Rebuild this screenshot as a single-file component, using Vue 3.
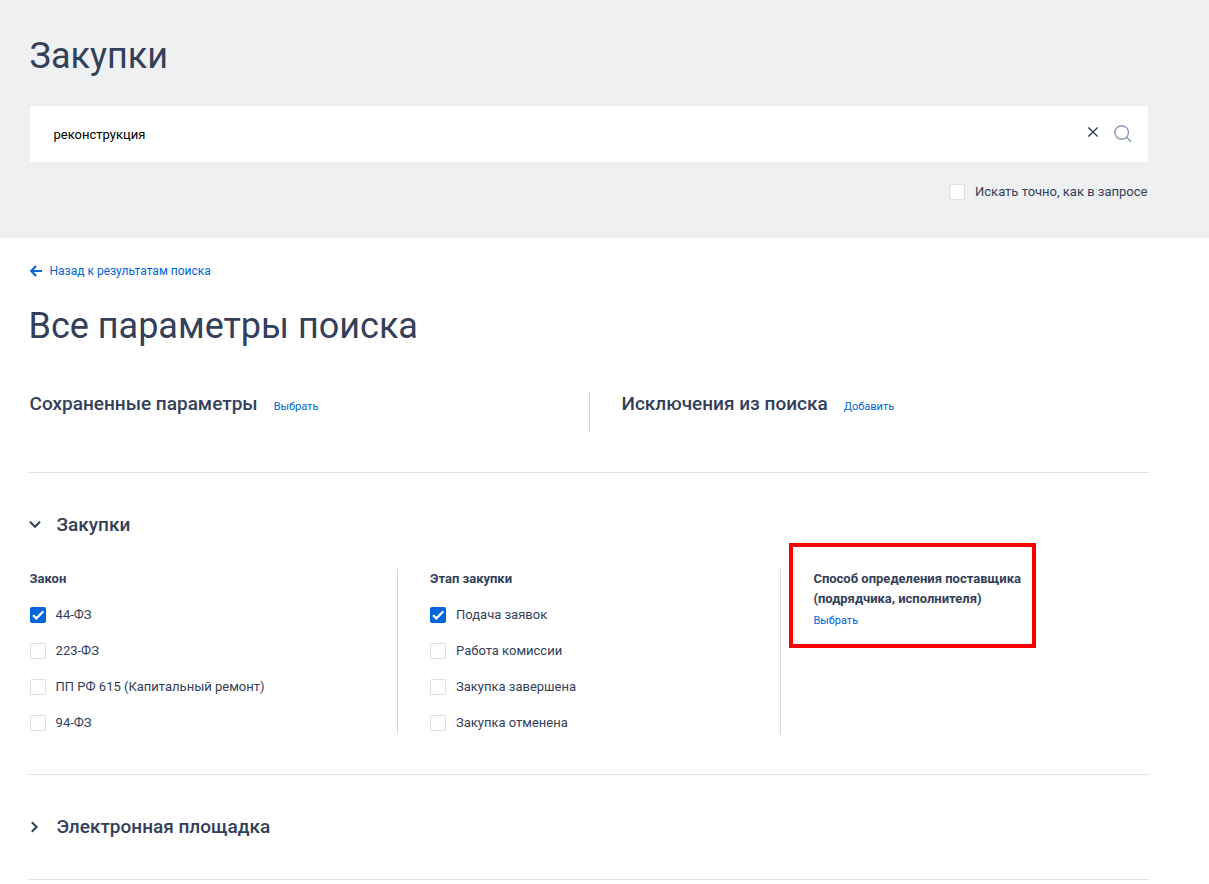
<script setup>
import { ref } from 'vue'

const query = ref('реконструкция')
const exact = ref(false)

// группы фильтров раздела «Закупки»
const groups = ref([
  {
    title: 'Закон',
    items: [
      { label: '44-ФЗ', checked: true },
      { label: '223-ФЗ', checked: false },
      { label: 'ПП РФ 615 (Капитальный ремонт)', checked: false },
      { label: '94-ФЗ', checked: false },
    ],
  },
  {
    title: 'Этап закупки',
    items: [
      { label: 'Подача заявок', checked: true },
      { label: 'Работа комиссии', checked: false },
      { label: 'Закупка завершена', checked: false },
      { label: 'Закупка отменена', checked: false },
    ],
  },
])

function clearQuery() {
  query.value = ''
}
</script>

<template>
  <div class="page">
    <header class="header">
      <h1 class="title title-top">Закупки</h1>
      <div class="search">
        <input v-model="query" class="search-input" type="text" />
        <button class="clear" @click="clearQuery">
          <svg width="12" height="12" viewBox="0 0 12 12">
            <path d="M1.4 1.4l9.2 9.2M10.6 1.4l-9.2 9.2" fill="none" stroke="#334059" stroke-width="1.4" />
          </svg>
        </button>
        <button class="find">
          <svg width="18" height="18" viewBox="0 0 18 18">
            <circle cx="7.7" cy="7.5" r="6.8" fill="none" stroke="#8d9bbb" stroke-width="1.4" />
            <path d="M12.5 12.2l4.6 4.6" fill="none" stroke="#8d9bbb" stroke-width="1.6" />
          </svg>
        </button>
      </div>
      <label class="exact">
        <input v-model="exact" class="native" type="checkbox" />
        <span class="box" :class="{ checked: exact }"></span>
        <span class="exact-text">Искать точно, как в запросе</span>
      </label>
    </header>

    <main class="main">
      <a class="back">
        <svg width="12" height="12" viewBox="0 0 12 12">
          <path d="M6 1L1.2 6L6 11M1.2 6H12" fill="none" stroke="#0065dc" stroke-width="2" />
        </svg>
        <span>Назад к результатам поиска</span>
      </a>
      <h1 class="title title-params">Все параметры поиска</h1>

      <section class="saved">
        <div class="saved-cell">
          <h2 class="subtitle">Сохраненные параметры</h2>
          <a class="link">Выбрать</a>
        </div>
        <div class="saved-cell second">
          <h2 class="subtitle">Исключения из поиска</h2>
          <a class="link">Добавить</a>
        </div>
      </section>

      <section class="block purchases">
        <div class="block-head">
          <svg class="chevron" width="12" height="12" viewBox="0 0 12 12">
            <path d="M1 2.8l5 5l5-5" fill="none" stroke="#334059" stroke-width="2" />
          </svg>
          <h2 class="subtitle">Закупки</h2>
        </div>
        <div class="columns">
          <div v-for="group in groups" :key="group.title" class="column">
            <h3 class="column-title">{{ group.title }}</h3>
            <label v-for="item in group.items" :key="item.label" class="option">
              <input v-model="item.checked" class="native" type="checkbox" />
              <span class="box" :class="{ checked: item.checked }">
                <svg v-if="item.checked" width="16" height="16" viewBox="0 0 16 16">
                  <path d="M3 8.1l3.4 3.2l7-7" fill="none" stroke="#fff" stroke-width="2.3" />
                </svg>
              </span>
              <span class="option-text">{{ item.label }}</span>
            </label>
          </div>
          <div class="column supplier">
            <div class="highlight">
              <h3 class="column-title">Способ определения поставщика<br />(подрядчика, исполнителя)</h3>
              <a class="link">Выбрать</a>
            </div>
          </div>
        </div>
      </section>

      <section class="block platform">
        <div class="block-head">
          <svg class="chevron" width="12" height="12" viewBox="0 0 12 12">
            <path d="M2.8 1.2l4.8 4.8l-4.8 4.8" fill="none" stroke="#334059" stroke-width="2" />
          </svg>
          <h2 class="subtitle">Электронная площадка</h2>
        </div>
      </section>
    </main>
  </div>
</template>

<style>
body {
  margin: 0;
  background: #fff;
}
</style>

<style scoped>
.page {
  height: 884px;
  overflow: hidden;
  font-family: Roboto, 'Liberation Sans', sans-serif;
  font-size: 13px;
  line-height: 20px;
  color: #334059;
}

h1,
h2,
h3 {
  margin: 0;
}

button {
  display: flex;
  padding: 0;
  border: 0;
  background: none;
  cursor: pointer;
}

.header {
  box-sizing: border-box;
  height: 238px;
  padding: 35px 61px 0 30px;
  background: #eef0f2;
}

.title {
  font-size: 36px;
  font-weight: 400;
  line-height: 42px;
  white-space: nowrap;
}

.title-top {
  margin-left: -0.5px;
}

.search {
  display: flex;
  align-items: center;
  box-sizing: border-box;
  height: 56px;
  margin-top: 29px;
  padding: 0 16px 0 23.5px;
  background: #fff;
}

.search-input {
  flex: 1;
  padding: 0;
  border: 0;
  outline: none;
  background: none;
  font-family: inherit;
  font-size: 13px;
  color: #000;
}

.clear {
  margin: 0 15px 4px 0;
}

.exact {
  display: flex;
  justify-content: flex-end;
  align-items: center;
  margin: 20px 0.6px 0 0;
}

.exact-text {
  margin-left: 10px;
}

.native {
  display: none;
}

.box {
  display: flex;
  flex: none;
  box-sizing: border-box;
  width: 16px;
  height: 16px;
  border: 1px solid #dcdfe2;
  border-radius: 2px;
  background: #fff;
}

.box.checked {
  border: 0;
  background: #0065dc;
}

.main {
  width: 1120px;
  margin-left: 29px;
}

.back {
  display: flex;
  align-items: center;
  gap: 7.5px;
  padding: 23px 0 0 1px;
  font-size: 12px;
  color: #0065dc;
}

.title-params {
  margin: 24px 0 0 -0.5px;
}

.saved {
  display: flex;
  height: 80px;
  margin-top: 45px;
  border-bottom: 1px solid #d5e3ef;
}

.saved-cell {
  display: flex;
  align-items: baseline;
  box-sizing: border-box;
  width: 560px;
  height: 40px;
  padding: 1px 0 0 0.5px;
}

.saved-cell.second {
  padding-left: 31.5px;
  border-left: 1px solid #d3dde0;
}

.subtitle {
  font-size: 19px;
  font-weight: 500;
  line-height: 22px;
  white-space: nowrap;
}

.link {
  font-size: 11px;
  color: #0065dc;
}

.saved-cell .link {
  margin-left: 16px;
}

.block {
  border-bottom: 1px solid #d5e3ef;
}

.block-head {
  display: flex;
  align-items: center;
}

.chevron {
  margin-right: 15.5px;
}

.purchases {
  box-sizing: border-box;
  height: 302px;
  padding-top: 41px;
}

.columns {
  display: flex;
  height: 165px;
  margin-top: 33px;
}

.column {
  box-sizing: border-box;
  width: 368px;
  padding-left: 0.6px;
}

.column + .column {
  width: 383px;
  padding-left: 32px;
  border-left: 1px solid #d3dde0;
}

.column-title {
  font-size: 13px;
  font-weight: 700;
  line-height: 20px;
  white-space: nowrap;
}

.option {
  display: flex;
  align-items: center;
  margin-top: 16px;
}

.option-text {
  margin-left: 10px;
  white-space: nowrap;
}

.column + .supplier {
  width: 340px;
  padding-left: 8px;
}

.highlight {
  box-sizing: border-box;
  width: 247px;
  height: 105px;
  margin-top: -26px;
  padding: 22px 0 0 20.4px;
  border: 4px solid #f80000;
}

.highlight .link {
  display: block;
  margin-top: 2px;
}

.platform {
  box-sizing: border-box;
  height: 105px;
  padding-top: 41px;
}
</style>
